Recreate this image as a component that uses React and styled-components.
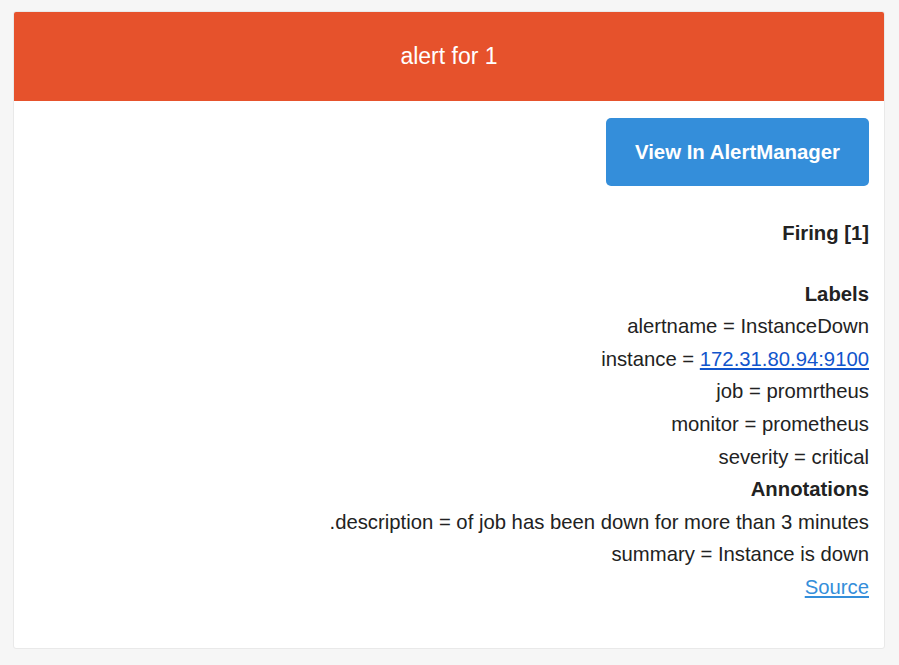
import React from "react";
import styled, { createGlobalStyle } from "styled-components";

const Global = createGlobalStyle`
  html, body { margin: 0; padding: 0; background: #f6f6f6; }
  body { font-family: "Liberation Sans", Arial, Helvetica, sans-serif; }
`;

const Page = styled.div`
  padding: 11px 14px 16px 13px;
`;

const Card = styled.div`
  background: #fff;
  border: 1px solid #e9e9e9;
  border-radius: 3px;
  overflow: hidden;
`;

const Header = styled.div`
  background: #e6522c;
  color: #fff;
  height: 90px;
  display: flex;
  align-items: center;
  justify-content: center;
  font-size: 23px;
  margin: -1px -1px 0 -1px;
  border-radius: 3px 3px 0 0;
`;

const Body = styled.div`
  padding: 17px 15px 44px 20px;
  display: flex;
  flex-direction: column;
  align-items: flex-end;
  text-align: right;
  color: #222;
  font-size: 20.3px;
`;

const Button = styled.a`
  display: flex;
  align-items: center;
  justify-content: center;
  width: 263px;
  height: 68px;
  background: #348eda;
  color: #fff;
  border-radius: 5px;
  font-weight: bold;
  font-size: 20.4px;
  text-decoration: none;
  margin-bottom: 31px;
`;

const Line = styled.div`
  line-height: 32.6px;
  white-space: nowrap;
  font-weight: ${(p) => (p.$bold ? "bold" : "normal")};
  margin-bottom: ${(p) => p.$gap || 0}px;
`;

const Link = styled.a`
  color: ${(p) => (p.$light ? "#348eda" : "#1155cc")};
  text-decoration: underline;
`;

const labels = [
  ["alertname", "InstanceDown"],
  ["instance", null],
  ["job", "promrtheus"],
  ["monitor", "prometheus"],
  ["severity", "critical"],
];

export default function App() {
  return (
    <>
      <Global />
      <Page>
        <Card>
          <Header>alert for 1</Header>
          <Body>
            <Button href="#">View In AlertManager</Button>
            <Line $bold $gap={28}>Firing [1]</Line>
            <Line $bold>Labels</Line>
            {labels.map(([k, v]) => (
              <Line key={k}>
                {k} ={" "}
                {v === null ? <Link href="#">172.31.80.94:9100</Link> : v}
              </Line>
            ))}
            <Line $bold>Annotations</Line>
            <Line>.description = of job has been down for more than 3 minutes</Line>
            <Line>summary = Instance is down</Line>
            <Line>
              <Link href="#" $light>Source</Link>
            </Line>
          </Body>
        </Card>
      </Page>
    </>
  );
}
